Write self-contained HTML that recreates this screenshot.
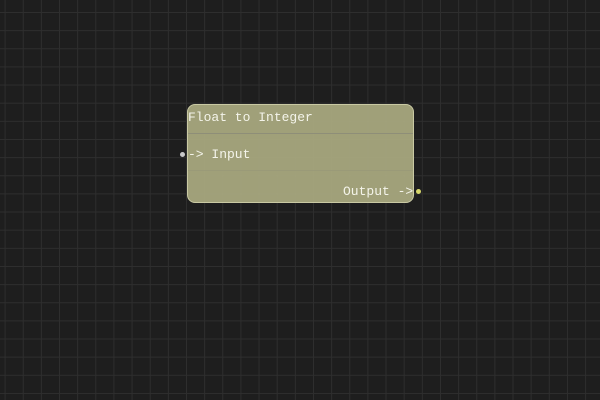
<!DOCTYPE html>
<html><head><style>
html,body{margin:0;padding:0;}
body{width:600px;height:400px;overflow:hidden;background-color:#1e1e1e;
background-image:linear-gradient(to right,#2e2e2e 1px,transparent 1px),linear-gradient(to bottom,#2e2e2e 1px,transparent 1px);
background-size:18.15px 18.15px;background-position:4.6px 12px;position:relative;
font-family:"Liberation Mono",monospace;}
.node{position:absolute;left:187px;top:104px;width:225px;height:97px;border:1px solid #c9c9a3;border-radius:8px;background:rgba(170,170,128,0.93);}
.hline{position:absolute;left:0;right:0;top:28px;height:1px;background:#8e8e78;}
.hline2{position:absolute;left:0;right:0;top:65px;height:1px;background:rgba(150,150,120,0.6);}
.t{position:absolute;color:#f4f4ea;font-size:13px;line-height:14px;white-space:pre;}
.dot{position:absolute;width:5px;height:5px;border-radius:50%;}
</style></head><body>
<div class="node"><div class="hline"></div><div class="hline2"></div></div>
<div class="t" style="left:188px;top:111px">Float to Integer</div>
<div class="t" style="left:188px;top:148px">-&gt; Input</div>
<div class="t" style="left:343px;top:185px">Output -&gt;</div>
<div class="dot" style="left:180px;top:152px;background:#c8c8c8"></div>
<div class="dot" style="left:416px;top:189px;background:#d6d66a"></div>
</body></html>
